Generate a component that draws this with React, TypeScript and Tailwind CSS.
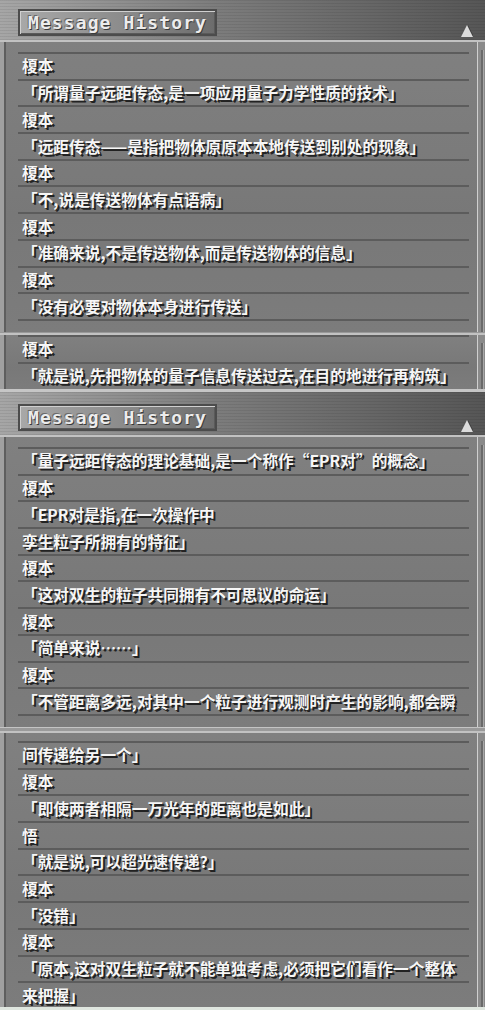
const screenOne = {
  main: [
    "榎本",
    "「所谓量子远距传态,是一项应用量子力学性质的技术」",
    "榎本",
    "「远距传态——是指把物体原原本本地传送到别处的现象」",
    "榎本",
    "「不,说是传送物体有点语病」",
    "榎本",
    "「准确来说,不是传送物体,而是传送物体的信息」",
    "榎本",
    "「没有必要对物体本身进行传送」",
  ],
  next: ["榎本", "「就是说,先把物体的量子信息传送过去,在目的地进行再构筑」"],
};

const screenTwo = {
  main: [
    "「量子远距传态的理论基础,是一个称作“EPR对”的概念」",
    "榎本",
    "「EPR对是指,在一次操作中",
    "孪生粒子所拥有的特征」",
    "榎本",
    "「这对双生的粒子共同拥有不可思议的命运」",
    "榎本",
    "「简单来说……」",
    "榎本",
    "「不管距离多远,对其中一个粒子进行观测时产生的影响,都会瞬",
  ],
  next: [
    "间传递给另一个」",
    "榎本",
    "「即使两者相隔一万光年的距离也是如此」",
    "悟",
    "「就是说,可以超光速传递?」",
    "榎本",
    "「没错」",
    "榎本",
    "「原本,这对双生粒子就不能单独考虑,必须把它们看作一个整体",
    "来把握」",
  ],
};

const Header = ({ height }: { height: string }) => (
  <div
    className={`${height} relative flex items-end justify-between pl-[18px] pr-[12px] pb-[4px] bg-[repeating-linear-gradient(0deg,rgba(0,0,0,0.07)_0px,rgba(0,0,0,0.07)_1px,transparent_1px,transparent_3px),linear-gradient(90deg,#a6a6a6,#7c7c7c_45%,#565656)]`}
  >
    <div className="h-[27px] w-[199px] border-2 border-[#4c4c4c] bg-[linear-gradient(90deg,#a8a8a8,#8a8a8a_55%,#6c6c6c)] shadow-[inset_1px_1px_0_#d0d0d0,inset_-1px_-1px_0_#5a5a5a] flex items-center pl-[8px]">
      <span className="font-['DejaVu_Sans_Mono',monospace] font-bold text-[18px] leading-none tracking-[1.1px] text-[#ececec] [text-shadow:1px_1px_0_#3a3a3a,-1px_-1px_0_#6a6a6a,1px_0_0_#9a9a9a]">
        Message History
      </span>
    </div>
    <svg width="12" height="12" viewBox="0 0 12 12" className="mb-[-1px]">
      <polygon points="6,0 12,12 0,12" fill="#3c3c3c" transform="translate(1,0)" />
      <polygon points="6,0 12,12 0,12" fill="#dcdcdc" />
    </svg>
  </div>
);

const Panel = ({
  rows,
  height,
  top,
  closed,
}: {
  rows: string[];
  height: string;
  top: string;
  closed?: boolean;
}) => (
  <div className={`${height} flex overflow-hidden border-t-2 border-[#c2c2c2]`}>
    <div className="w-[4px] bg-[#a0a0a0]" />
    <div className="w-[2px] bg-[#5e5e5e]" />
    <div
      className={`flex-1 ${top} pl-[12px] pr-[8px] bg-[linear-gradient(180deg,#808080,#787878_60%,#7c7c7c)]`}
    >
      <div className={closed ? "border-b-2 border-[#5c5c5c]" : ""}>
        {rows.map((text, i) => (
          <div
            key={i}
            className="h-[26.7px] border-t-2 border-[#5c5c5c] flex items-center pl-[4px] whitespace-nowrap font-['Noto_Sans_CJK_SC','Noto_Sans',sans-serif] font-bold text-[15.7px] leading-none text-[#f6f6f6] [text-shadow:2px_2px_0_#222,1px_1px_0_#333]"
          >
            {text}
          </div>
        ))}
      </div>
    </div>
    <div className="w-[1px] bg-[#cfcfcf]" />
    <div className="w-[7px] bg-[#8a8a8a] flex justify-center pt-[8px]">
      <div className="w-[2px] h-full bg-[#6a6a6a] shadow-[1px_0_0_#a8a8a8]" />
    </div>
  </div>
);

export default function App() {
  return (
    <div className="w-[485px] h-[1010px] overflow-hidden bg-[#777777] flex flex-col">
      <div className="h-[392px] flex flex-col border-b-[3px] border-[#c6c6c6]">
        <Header height="h-[40px]" />
        <Panel rows={screenOne.main} height="h-[292px]" top="pt-[10px]" closed />
        <div className="h-[1px] bg-[#999]" />
        <Panel rows={screenOne.next} height="h-[56px]" top="pt-0" />
      </div>
      <div className="flex-1 flex flex-col overflow-hidden">
        <Header height="h-[43px]" />
        <Panel rows={screenTwo.main} height="h-[292px]" top="pt-[10px]" closed />
        <div className="h-[4px] bg-[#9a9a9a] border-t border-[#c4c4c4]" />
        <Panel rows={screenTwo.next} height="flex-1" top="pt-[8px]" />
        <div className="h-[3px] bg-[#dfe6df]" />
      </div>
    </div>
  );
}
